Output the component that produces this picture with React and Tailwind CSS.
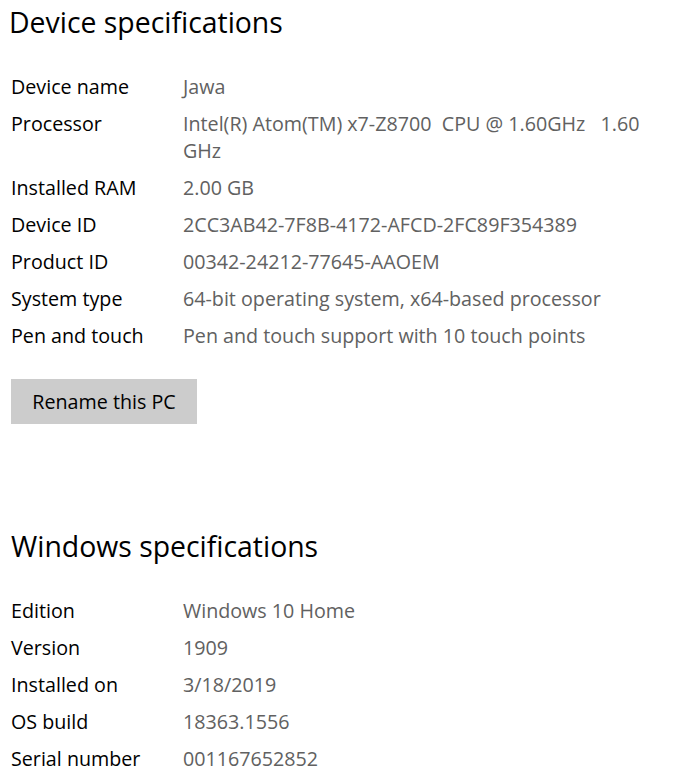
const device = [
  ["Device name", "Jawa"],
  ["Processor", "Intel(R) Atom(TM) x7-Z8700  CPU @ 1.60GHz   1.60\nGHz"],
  ["Installed RAM", "2.00 GB"],
  ["Device ID", "2CC3AB42-7F8B-4172-AFCD-2FC89F354389"],
  ["Product ID", "00342-24212-77645-AAOEM"],
  ["System type", "64-bit operating system, x64-based processor"],
  ["Pen and touch", "Pen and touch support with 10 touch points"],
];

const windows = [
  ["Edition", "Windows 10 Home"],
  ["Version", "1909"],
  ["Installed on", "3/18/2019"],
  ["OS build", "18363.1556"],
  ["Serial number", "001167652852"],
];

function Rows({ rows }) {
  return (
    <div className="flex flex-col gap-[10px]">
      {rows.map(([k, v]) => (
        <div key={k} className="flex text-[19.7px] leading-[27px]">
          <div className="w-[172px] shrink-0 text-black">{k}</div>
          <div className="text-[#616161] whitespace-pre-wrap">{v}</div>
        </div>
      ))}
    </div>
  );
}

export default function App() {
  return (
    <div
      className="w-[684px] h-[778px] overflow-hidden bg-white pl-[11px]"
      style={{ fontFamily: '"Open Sans", "Noto Sans", sans-serif' }}
    >
      <h1 className="mt-[2px] -ml-[2px] text-[28.4px] leading-[40px] text-black">Device specifications</h1>
      <div className="mt-[31px]">
        <Rows rows={device} />
      </div>
      <button className="mt-[30px] w-[186px] h-[45px] bg-[#cccccc] text-[19.7px] text-black">
        Rename this PC
      </button>
      <h1 className="mt-[102px] text-[28.4px] leading-[40px] text-black">Windows specifications</h1>
      <div className="mt-[31px]">
        <Rows rows={windows} />
      </div>
    </div>
  );
}
